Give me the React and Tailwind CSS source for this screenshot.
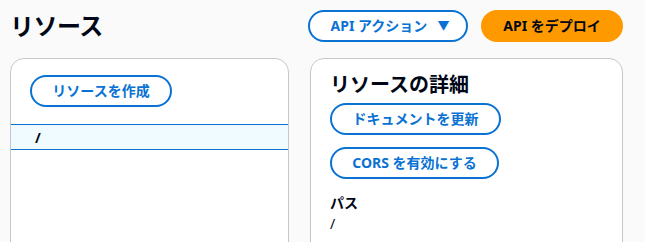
export default function App() {
  const font = { fontFamily: '"Noto Sans", "Noto Sans CJK JP", sans-serif' };
  const outline =
    "flex items-center justify-center h-[32px] rounded-full border-2 border-[#0972d3] bg-white text-[14px] font-bold text-[#0972d3] leading-none";

  return (
    <div
      className="w-[645px] h-[242px] overflow-hidden bg-[#fafafa] text-[#000716]"
      style={font}
    >
      <div className="w-[613px] ml-[10px] pt-[10px]">
        <div className="flex items-start justify-between h-[48px]">
          <h1 className="text-[24px] font-bold leading-[32px] tracking-[-0.5px]">リソース</h1>
          <div className="flex gap-[13px]">
            <button className={`${outline} w-[160px] gap-[10px] pl-[4px]`}>
              <span>API アクション</span>
              <span className="text-[12px]">▼</span>
            </button>
            <button className="flex items-center justify-center h-[32px] w-[142px] rounded-full bg-[#ff9900] text-[14px] font-bold text-[#000716] leading-none">
              API をデプロイ
            </button>
          </div>
        </div>

        <div className="flex gap-[21px]">
          <div className="w-[279px] h-[200px] rounded-[14px] border border-[#c6c6cd] bg-white pt-[16px]">
            <div className="px-[19px]">
              <button className={`${outline} w-[142px]`}>リソースを作成</button>
            </div>
            <div className="mt-[17px] h-[26px] border-y border-[#0972d3] bg-[#f0fbff] pl-[24px] flex items-center text-[14px] font-bold">
              /
            </div>
          </div>

          <div className="w-[313px] h-[200px] rounded-[14px] border border-[#c6c6cd] bg-white pt-[13px] px-[19px]">
            <h2 className="text-[20px] font-bold leading-[26px]">リソースの詳細</h2>
            <div className="mt-[5px] flex flex-col gap-[12px]">
              <button className={`${outline} w-[171px]`}>ドキュメントを更新</button>
              <button className={`${outline} w-[169px]`}>CORS を有効にする</button>
            </div>
            <div className="mt-[13px] text-[14px] leading-[21px]">
              <div className="font-bold">パス</div>
              <div>/</div>
            </div>
          </div>
        </div>
      </div>
    </div>
  );
}
